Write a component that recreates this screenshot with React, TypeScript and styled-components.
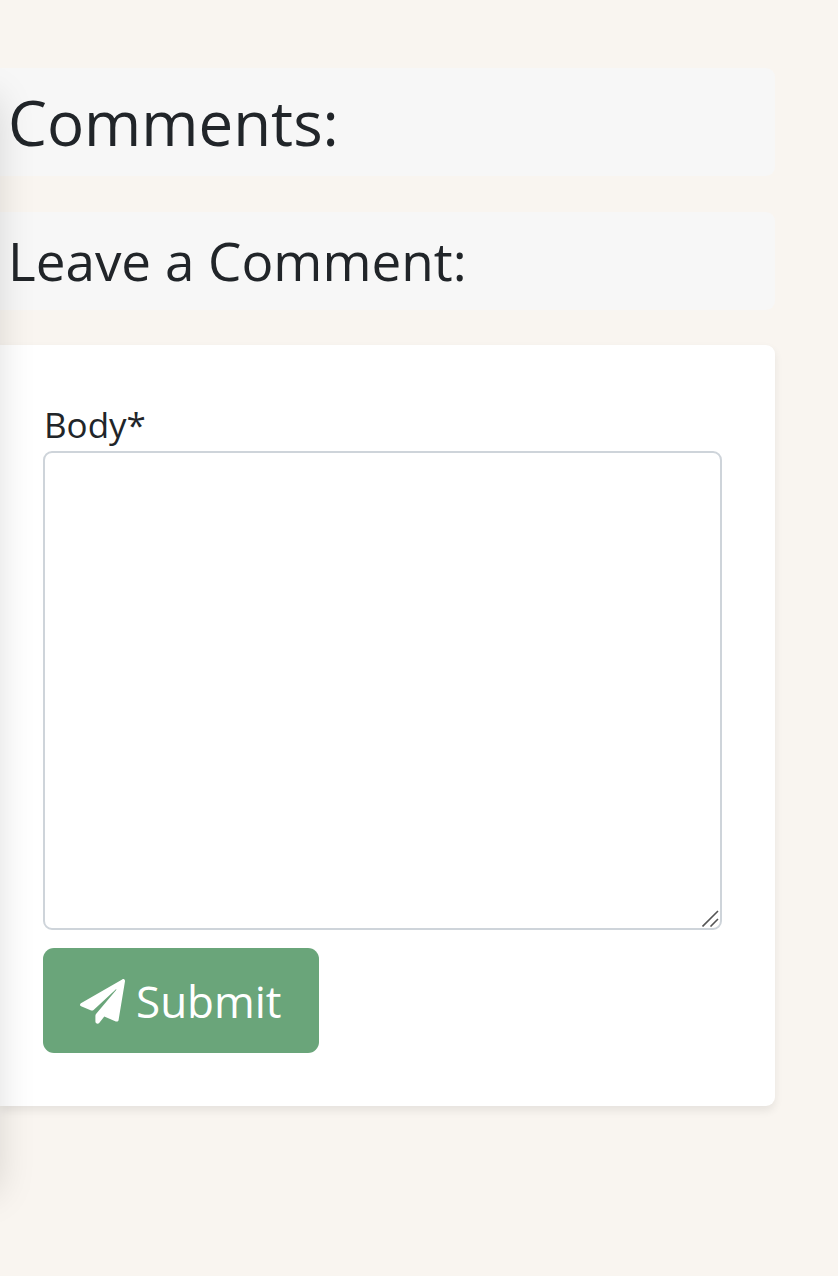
import React from "react";
import styled, { createGlobalStyle } from "styled-components";

const GlobalStyle = createGlobalStyle`
  *, *::before, *::after { box-sizing: border-box; }
  body {
    margin: 0;
    background: #f9f5f0;
    color: #212529;
    font-family: "Open Sans", sans-serif;
    font-weight: 400;
    overflow: hidden;
  }
`;

const Page = styled.main`
  position: relative;
  height: 1276px;
  padding: 68px 63px 0 0;
  overflow: hidden;
`;

const SideShade = styled.div`
  position: absolute;
  left: -403px;
  top: 80px;
  width: 400px;
  height: 1094px;
  box-shadow: 0 18px 36px rgba(0, 0, 0, 0.15);
  pointer-events: none;
`;

const Heading = styled.h2<{ $size: number; $height: number; $gap: number; $drop: number }>`
  display: flex;
  align-items: center;
  height: ${(p) => p.$height}px;
  margin: 0 0 ${(p) => p.$gap}px;
  padding: ${(p) => p.$drop}px 0 0 8px;
  border-radius: 0 9px 9px 0;
  background: #f7f7f7;
  font-size: ${(p) => p.$size}px;
  font-weight: 400;
  line-height: 1.2;
  white-space: nowrap;
`;

const Card = styled.form`
  height: 761px;
  padding: 54px 53px 0 43px;
  border-radius: 0 9px 9px 0;
  background: #fff;
  box-shadow: 0 4.5px 9px rgba(0, 0, 0, 0.075);
`;

const Label = styled.label`
  display: block;
  height: 52px;
  padding-left: 1px;
  font-size: 35px;
  line-height: 51px;
`;

const Field = styled.div`
  position: relative;
  height: 479px;
`;

const TextArea = styled.textarea`
  display: block;
  width: 100%;
  height: 100%;
  padding: 13px 27px;
  border: 2px solid #ced4da;
  border-radius: 9px;
  background: #fff;
  color: inherit;
  font: inherit;
  font-size: 36px;
  resize: none;
  outline: none;
`;

const Grip = styled.svg`
  position: absolute;
  right: 3px;
  bottom: 3px;
  width: 17px;
  height: 17px;
  pointer-events: none;
`;

const SubmitButton = styled.button`
  display: flex;
  align-items: center;
  gap: 11px;
  width: 276px;
  height: 105px;
  margin-top: 18px;
  padding: 0 0 0 37px;
  border: 0;
  border-radius: 11px;
  background: #6aa57a;
  color: #fff;
  font: inherit;
  font-size: 44px;
  line-height: 68px;
`;

const PlaneIcon = styled.svg`
  width: 45px;
  height: 45px;
  margin-top: 2px;
  flex: none;
`;

export default function App() {
  return (
    <>
      <GlobalStyle />
      <Page>
        <Heading as="h1" $size={61.8} $height={108} $gap={36} $drop={1}>Comments:</Heading>
        <Heading $size={53} $height={98} $gap={35} $drop={0}>Leave a Comment:</Heading>
        <Card onSubmit={(e) => e.preventDefault()}>
          <Label htmlFor="body">Body*</Label>
          <Field>
            <TextArea id="body" name="body" />
            <Grip viewBox="0 0 17 17" fill="none" stroke="#555" strokeWidth="1.6" aria-hidden="true">
              <path d="M.5 16.5 16 1M8.5 16.5 16 9" />
            </Grip>
          </Field>
          <SubmitButton type="submit">
            <PlaneIcon viewBox="0 0 45 45" fill="#fff" aria-hidden="true">
              <path d="M42.2.4.9 24.3c-1.3.8-1.1 2.4.2 3l10.1 4.1c.9.3 1.7.1 2.4-.5L35.7 10.4c.4-.4.9.1.5.6L16.2 34.8c-.6.7-.8 1.3-.8 2.2v5.6c0 2.1 2.6 2.8 3.8 1.3l5.1-6.3 11.5 4.8c1.3.5 2.6-.2 2.8-1.5L45 2.2C45.2.5 43.6-.4 42.2.4Z" />
            </PlaneIcon>
            Submit
          </SubmitButton>
        </Card>
        <SideShade />
      </Page>
    </>
  );
}
